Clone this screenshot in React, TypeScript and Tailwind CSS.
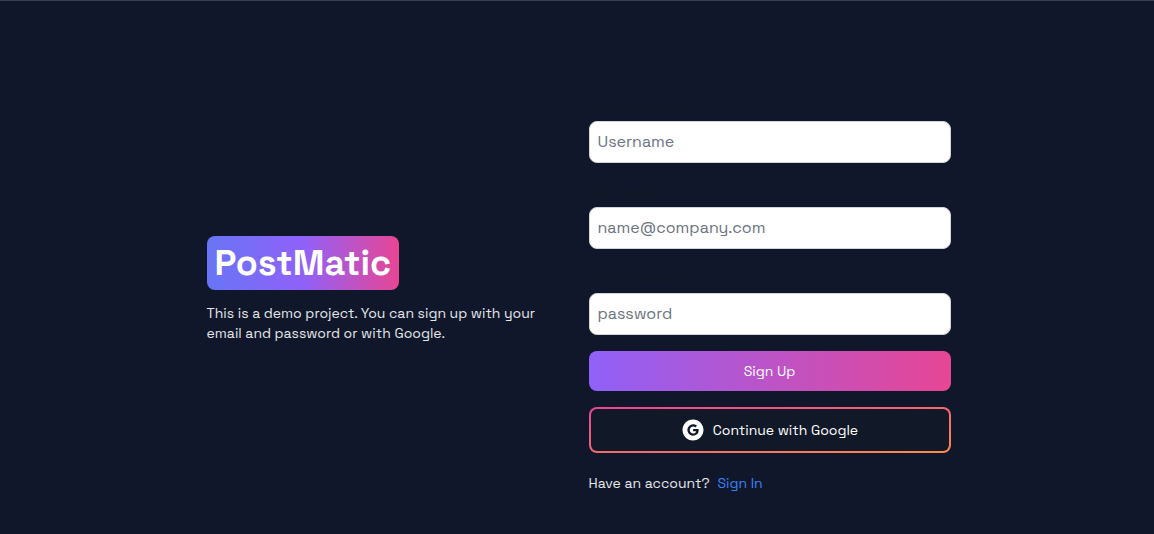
import { AiFillGoogleCircle } from "react-icons/ai";

const fields = [
  { id: "username", label: "Your username", type: "text", placeholder: "Username" },
  { id: "email", label: "Your email", type: "email", placeholder: "name@company.com" },
  { id: "password", label: "Your password", type: "password", placeholder: "password" },
];

export default function App() {
  return (
    <div className="min-h-screen border-t border-[#374151] bg-[#10172a] pl-[3px] font-['Space_Grotesk','Inter',sans-serif] text-gray-200">
      <main className="mx-auto flex max-w-3xl flex-col gap-5 px-3 pt-23 pb-10 md:flex-row md:items-center">
        <div className="flex-1 pb-[7px]">
          <a
            href="#"
            className="block w-fit rounded-lg bg-[linear-gradient(to_right,#6875f5,#9061f9,#e74694)] px-2 py-1.5 text-4xl leading-[42px] font-bold text-white"
          >
            PostMatic
          </a>
          <p className="mt-[13px] text-sm">
            This is a demo project. You can sign up with your email and password or with Google.
          </p>
        </div>
        <div className="flex-1">
          <form className="flex flex-col gap-4">
            {fields.map((f) => (
              <div key={f.id}>
                <label htmlFor={f.id} className="mb-1 block text-sm leading-6 font-medium text-[#111827]">
                  {f.label}
                </label>
                <input
                  id={f.id}
                  type={f.type}
                  placeholder={f.placeholder}
                  className="block h-[42px] w-full rounded-lg border border-gray-300 bg-white px-2 pb-0.5 text-base text-gray-900 placeholder:text-[#6b7280]"
                />
              </div>
            ))}
            <button
              type="submit"
              className="h-10 rounded-lg bg-[linear-gradient(to_right,#9061f9,#e74694)] text-sm text-white"
            >
              Sign Up
            </button>
            <button
              type="button"
              className="rounded-lg bg-[linear-gradient(to_bottom_right,#e74694,#ff8a4c)] p-0.5 text-sm text-white"
            >
              <span className="flex h-[42px] items-center justify-center gap-2 rounded-md bg-[#111827]">
                <AiFillGoogleCircle className="size-6" />
                Continue with Google
              </span>
            </button>
          </form>
          <div className="mt-5 flex gap-2 text-sm">
            <span>Have an account?</span>
            <a href="#" className="text-[#3b82f6]">
              Sign In
            </a>
          </div>
        </div>
      </main>
    </div>
  );
}
